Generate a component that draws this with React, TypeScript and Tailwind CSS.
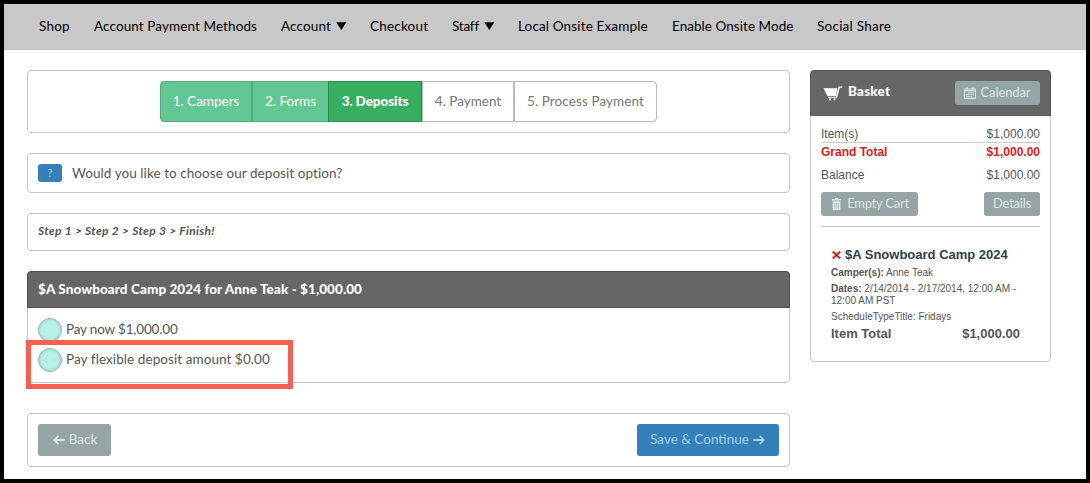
import type { ReactNode } from 'react';

const Caret = () => (
  <svg width="11" height="8" viewBox="0 0 11 8" className="ml-[5px] shrink-0">
    <path d="M0.3 0.3h10L5.3 8z" fill="#000" />
  </svg>
);

const Cart = () => (
  <svg width="20" height="15" viewBox="0 0 20 15" className="shrink-0" fill="#fff">
    <path d="M0.5 2.2h13.9L12.9 10H4.4z" />
    <path d="M19.2 0.4v1.4h-2.4L14.2 11.8H5.2l-.4-1.1h8.2L15.5 0.4z" />
    <circle cx="7" cy="13.3" r="1.1" />
    <circle cx="11.6" cy="13.3" r="1.1" />
  </svg>
);

const CalendarIcon = () => (
  <svg width="12" height="12" viewBox="0 0 12 12" className="shrink-0" fill="none" stroke="#dde4e4">
    <path d="M0.6 2h10.8v9.4H0.6z" strokeWidth="1.1" />
    <path d="M0.6 3.6h10.8" strokeWidth="1.2" />
    <path d="M3 0.2v2.2M9 0.2v2.2" strokeWidth="1.4" />
    <path d="M4.2 5.7h5.6M2.2 7.7h7.6M2.2 9.7h5.6" strokeWidth="1.2" strokeDasharray="1.4 0.7" />
  </svg>
);

const Trash = () => (
  <svg width="9" height="12" viewBox="0 0 9 12" className="shrink-0" fill="#dde4e4">
    <path d="M3 0h3v1h3v1.6H0V1h3z" />
    <path fillRule="evenodd" d="M0.6 3.3h7.8V12H0.6zM2.3 5v5.4h.5V5zM4.25 5v5.4h.5V5zM6.2 5v5.4h.5V5z" />
  </svg>
);

const Arrow = ({ flip = false }: { flip?: boolean }) => (
  <svg
    width="12"
    height="10"
    viewBox="0 0 12 10"
    className={flip ? 'shrink-0 rotate-180' : 'shrink-0'}
    fill="none"
    stroke="currentColor"
    strokeWidth="1.8"
  >
    <path d="M0.3 5h10.3M6.6 0.8L10.8 5L6.6 9.2" />
  </svg>
);

const Panel = ({ className, children }: { className: string; children: ReactNode }) => (
  <section className={`rounded-[4px] border border-[#c6c6c6] ${className}`}>{children}</section>
);

const nav = [
  { label: 'Shop', cls: 'w-[55px] tracking-[0.2px]' },
  { label: 'Account Payment Methods', cls: 'w-[187px] tracking-[0.1px]' },
  { label: 'Account', cls: 'w-[89px] tracking-[0.12px]', caret: true },
  { label: 'Checkout', cls: 'w-[82px] tracking-[0.2px]' },
  { label: 'Staff', cls: 'w-[66px] -tracking-[0.2px]', caret: true },
  { label: 'Local Onsite Example', cls: 'w-[154px] tracking-[0.15px]' },
  { label: 'Enable Onsite Mode', cls: 'w-[145px] tracking-[0.05px]' },
  { label: 'Social Share', cls: 'w-[90px] tracking-[0.25px]' },
];

const steps = [
  { label: '1. Campers', cls: 'w-[92px] rounded-l-[4px] border-[#55ad7f] bg-[#62c792] text-white' },
  { label: '2. Forms', cls: 'w-[76px] border-[#55ad7f] border-r-0 bg-[#62c792] text-white' },
  { label: '3. Deposits', cls: 'w-[94px] border-[#2d8a4f] bg-[#38ae61] font-black -tracking-[0.1px] text-white' },
  { label: '4. Payment', cls: 'w-[92px] border-[#b9b9b9] bg-white text-[#777]' },
  { label: '5. Process Payment', cls: 'w-[143px] rounded-r-[4px] border-[#b9b9b9] bg-white tracking-[0.1px] text-[#777]' },
];

const Radio = () => (
  <span className="h-6 w-6 shrink-0 rounded-full border border-[#93bdb5] bg-[#b8f0e7] shadow-[inset_0_0_3px_rgba(70,130,120,0.45)]" />
);

export default function App() {
  return (
    <div className="h-[483px] w-[1090px] overflow-hidden border-4 border-black bg-white font-['Lato',sans-serif] text-[13.5px] text-[#555]">
      <nav className="flex h-[46px] items-center bg-[#c8c8c8] pb-[2px] pl-[35px] text-black">
        {nav.map((n) => (
          <a key={n.label} className={`flex shrink-0 items-center whitespace-nowrap ${n.cls}`}>
            {n.label}
            {n.caret && <Caret />}
          </a>
        ))}
      </nav>

      <div className="flex gap-5 pl-[23px] pt-5">
        <main className="flex w-[763px] flex-col">
          <Panel className="flex h-[63px] items-center justify-center pb-px">
            <div className="flex h-[41px]">
              {steps.map((s) => (
                <div key={s.label} className={`flex items-center justify-center whitespace-nowrap border ${s.cls}`}>
                  {s.label}
                </div>
              ))}
            </div>
          </Panel>

          <Panel className="mt-5 flex h-10 items-center pl-[10px]">
            <span className="flex h-[18px] w-6 items-center justify-center rounded-[3px] bg-[#3680ba] text-[11px] text-[#9fd0f0]">
              ?
            </span>
            <span className="ml-[10px] whitespace-nowrap tracking-[0.065px]">
              Would you like to choose our deposit option?
            </span>
          </Panel>

          <Panel className="mt-5 flex h-[38px] items-center pb-[3px] pl-[10px] text-[12px] font-bold italic">
            <span className="whitespace-nowrap tracking-[0.31px]">Step 1 &gt; Step 2 &gt; Step 3 &gt; Finish!</span>
          </Panel>

          <div className="relative mt-5">
            <Panel className="h-[112px]">
              <h2 className="-mx-px -mt-px flex h-[37px] items-center rounded-t-[4px] border border-[#4d4d4d] bg-[#666] pl-[10px] font-black text-white">
                <span className="whitespace-nowrap tracking-[0.08px]">
                  $A Snowboard Camp 2024 for Anne Teak - $1,000.00
                </span>
              </h2>
              <div className="flex flex-col gap-[6px] pl-[10px] pt-[10px]">
                <label className="flex h-6 items-center gap-1 whitespace-nowrap">
                  <Radio />
                  <span className="pb-px -tracking-[0.17px]">Pay now $1,000.00</span>
                </label>
                <label className="flex h-6 items-center gap-1 whitespace-nowrap">
                  <Radio />
                  <span className="pb-px tracking-[0.08px]">Pay flexible deposit amount $0.00</span>
                </label>
              </div>
            </Panel>
            <div className="absolute -left-px top-[69px] h-[49px] w-[267px] border-[5px] border-[#f95e50]" />
          </div>

          <Panel className="mt-[30px] flex h-[54px] items-center justify-between px-[10px]">
            <button className="flex h-8 w-[73px] items-center justify-center gap-1 rounded-[3px] bg-[#95a5a5] pl-px text-[#dde4e4]">
              <Arrow flip />
              <span className="pb-px">Back</span>
            </button>
            <button className="flex h-8 w-[142px] items-center justify-center gap-1 rounded-[3px] bg-[#3680ba] pr-px text-[#9fd0f0]">
              <span className="whitespace-nowrap pb-px">Save &amp; Continue</span>
              <Arrow />
            </button>
          </Panel>
        </main>

        <aside className="h-[292px] w-[241px] rounded-[4px] border border-[#c6c6c6] font-['Liberation_Sans',sans-serif] text-[12px]">
          <header className="-mx-px -mt-px flex h-[46px] items-center rounded-t-[4px] border border-[#555] bg-[#666] pl-3 pr-[10px] font-['Lato',sans-serif] text-[13.5px] text-white">
            <Cart />
            <span className="mb-1 ml-[5px] font-black tracking-[0.2px]">Basket</span>
            <button className="ml-auto flex h-6 w-[85px] items-center justify-center gap-1 rounded-[3px] bg-[#95a5a5] text-[13px] text-[#dde4e4]">
              <CalendarIcon />
              <span className="-tracking-[0.1px]">Calendar</span>
            </button>
          </header>
          <div className="px-[10px] pt-[9px]">
            <div className="flex h-[18px] items-center justify-between border-b border-[#ccc]">
              <span>Item(s)</span>
              <span>$1,000.00</span>
            </div>
            <div className="flex h-[18px] items-center justify-between font-bold text-[#dd1c1a]">
              <span>Grand Total</span>
              <span>$1,000.00</span>
            </div>
            <div className="mt-[5px] flex h-[18px] items-center justify-between">
              <span>Balance</span>
              <span>$1,000.00</span>
            </div>
            <div className="mt-2 flex h-6 justify-between font-['Lato',sans-serif] text-[13px] text-[#dde4e4]">
              <button className="flex w-[97px] items-center justify-center gap-[6px] rounded-[3px] bg-[#95a5a5] pl-[2px]">
                <Trash />
                <span className="whitespace-nowrap -tracking-[0.25px]">Empty Cart</span>
              </button>
              <button className="w-14 rounded-[3px] bg-[#95a5a5] -tracking-[0.2px]">Details</button>
            </div>
            <div className="mt-[10px] border-t border-[#c6c6c6]" />
            <div className="px-[10px] pt-5 text-[10px] leading-3">
              <h3 className="flex h-4 items-center whitespace-nowrap text-[13px] font-bold text-[#2c3e50]">
                <svg width="9" height="8" viewBox="0 0 9 8" className="ml-px mr-1 shrink-0" stroke="#d9231f" strokeWidth="2.1">
                  <path d="M0.8 0.5l7.4 7M8.2 0.5l-7.4 7" />
                </svg>
                <span>$A Snowboard Camp 2024</span>
              </h3>
              <p className="mt-1">
                <b>Camper(s):</b> Anne Teak
              </p>
              <p className="mt-1 whitespace-nowrap">
                <b>Dates:</b> 2/14/2014 - 2/17/2014, 12:00 AM -<br />
                12:00 AM PST
              </p>
              <p className="mt-1">ScheduleTypeTitle: Fridays</p>
              <div className="mt-[3px] flex h-4 items-center justify-between pr-[10px] text-[13px] font-bold">
                <span>Item Total</span>
                <span>$1,000.00</span>
              </div>
            </div>
          </div>
        </aside>
      </div>
    </div>
  );
}
